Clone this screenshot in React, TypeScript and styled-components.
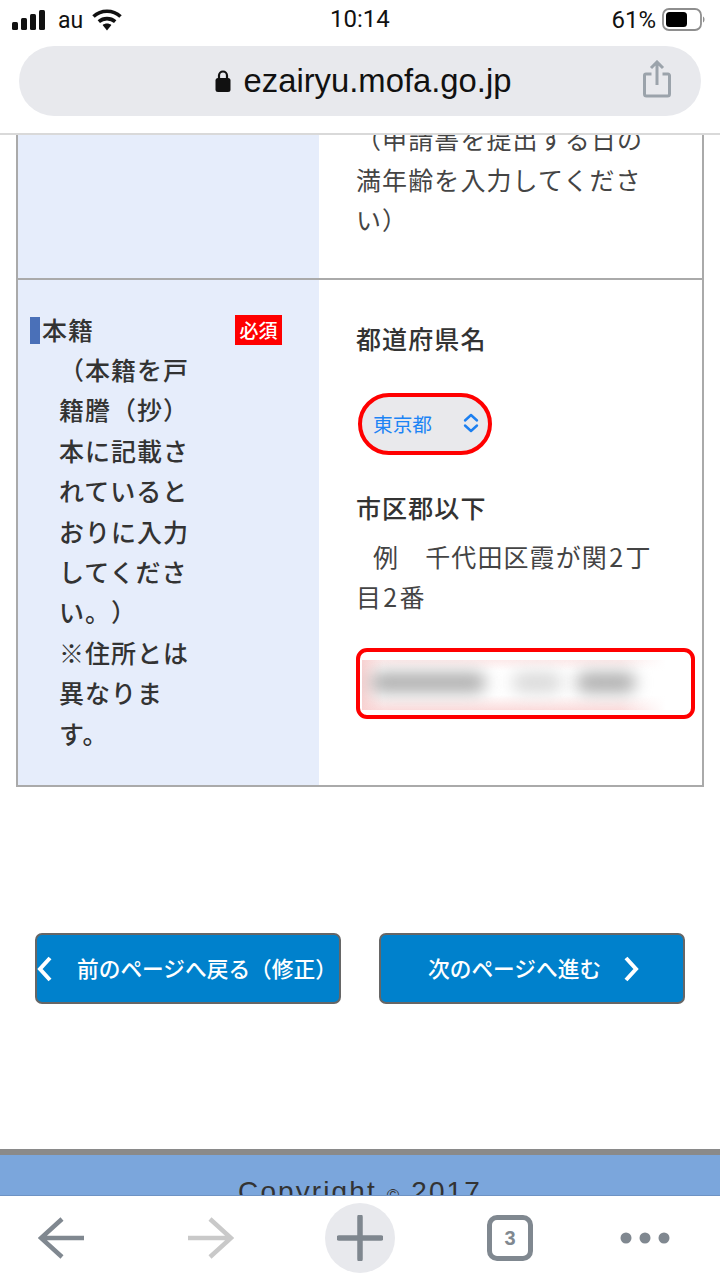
import React from "react";
import styled, { createGlobalStyle } from "styled-components";

const Global = createGlobalStyle`
  html, body { margin: 0; padding: 0; background: #fff; }
  * { box-sizing: border-box; text-spacing-trim: space-all; }
`;

const JP = `"Noto Sans CJK JP", "Noto Sans", sans-serif`;

const Screen = styled.div`
  width: 720px;
  height: 1280px;
  display: flex;
  flex-direction: column;
  overflow: hidden;
  background: #fff;
  font-family: ${JP};
  color: #333;
`;

const TopChrome = styled.header`
  height: 135px;
  flex: none;
  background: #fff;
  border-bottom: 2px solid #d9d9d9;
`;

const StatusBar = styled.div`
  height: 46px;
  position: relative;
  display: flex;
  align-items: center;
  justify-content: space-between;
  padding: 0 14px 6px 12px;
  font-family: Roboto, sans-serif;
  font-size: 24px;
  color: #111;
`;

const StatusGroup = styled.div`
  display: flex;
  align-items: center;
  gap: 6px;
`;

const Carrier = styled.span`
  margin: 0 3px 0 7px;
  font-size: 23px;
`;

const Clock = styled.span`
  position: absolute;
  left: 330px;
  top: 5px;
  font-size: 24px;
  font-weight: 400;
`;

const UrlBar = styled.div`
  margin: 0 19px;
  height: 70px;
  border-radius: 35px;
  background: #e8e9ed;
  position: relative;
  display: flex;
  align-items: center;
  justify-content: center;
  gap: 13px;
  padding-left: 6px;
  font-family: "Liberation Sans", sans-serif;
  font-size: 32.8px;
  color: #111;
`;

const ShareButton = styled.span`
  position: absolute;
  right: 30px;
  top: 14px;
  display: flex;
`;

const Content = styled.main`
  flex: 1;
  min-height: 0;
  overflow: hidden;
  display: flex;
  flex-direction: column;
`;

const FormTable = styled.section`
  margin: -17px 16px 0;
  border: 2px solid #aaa;
  border-top: 0;
  flex: none;
`;

const Row = styled.div`
  display: grid;
  grid-template-columns: 301px 1fr;
  & + & {
    border-top: 2px solid #aaa;
  }
`;

const HeadCell = styled.div`
  background: #e6edfb;
  padding: 29px 12px 32px;
  position: relative;
`;

const BodyCell = styled.div<{ $bottom: number; $top: number }>`
  padding: ${(p) => p.$top}px 8px ${(p) => p.$bottom}px 37px;
`;

const BodyText = styled.p<{ $indent?: number; $mt?: number }>`
  margin: ${(p) => p.$mt ?? 0}px 0 0;
  font-size: 25px;
  line-height: 40.5px;
  letter-spacing: 1.1px;
  text-indent: ${(p) => p.$indent ?? 0}px;
  width: 304px;
  color: #444;
  font-weight: 400;
`;

const Digit = styled.span`
  padding: 0 1.25px;
`;

const HeadTitle = styled.div`
  display: flex;
  align-items: center;
  font-size: 25px;
  line-height: 40.5px;
  letter-spacing: 1px;
  font-weight: 500;
  gap: 2px;
`;

const Marker = styled.span`
  width: 10px;
  height: 27px;
  margin-top: 4px;
  background: #4a70b8;
`;

const Required = styled.span`
  position: absolute;
  left: 217px;
  top: 35px;
  width: 47px;
  height: 30px;
  background: #f00;
  color: #fff;
  font-size: 19px;
  font-weight: 500;
  line-height: 29px;
  text-align: center;
`;

const HeadNote = styled.p`
  margin: 0 0 0 29px;
  width: 134px;
  font-size: 25px;
  line-height: 40.4px;
  letter-spacing: 1px;
  font-weight: 500;
`;

const FieldLabel = styled.div<{ $mt?: number }>`
  font-size: 25px;
  line-height: 40.5px;
  letter-spacing: 1.1px;
  font-weight: 500;
  margin-top: ${(p) => p.$mt ?? 0}px;
`;

const SelectPill = styled.div`
  margin: 35px 0 0 2px;
  width: 134px;
  height: 62px;
  border: 4px solid #f00;
  border-radius: 31px;
  background: #e9e9ec;
  display: flex;
  align-items: center;
  justify-content: space-between;
  padding: 0 9px 2px 11px;
  font-size: 19.7px;
  color: #1c84f5;
`;

const InputFrame = styled.div`
  margin-top: 31px;
  width: 339px;
  height: 71px;
  border: 4px solid #f00;
  border-radius: 11px;
  padding: 8px 0 0 2px;
`;

const BlurPatch = styled.div`
  width: 304px;
  height: 50px;
  background:
    linear-gradient(90deg, transparent 85%, #fff 100%),
    linear-gradient(90deg, #f8d2d2 0%, rgba(255, 255, 255, 0) 7%),
    linear-gradient(180deg, #fdeaea 0%, #fff 22%, #fff 70%, #fbdcdc 100%);
  position: relative;
  overflow: hidden;
`;

const BlurInk = styled.span<{ $l: number; $w: number; $c: string }>`
  position: absolute;
  left: ${(p) => p.$l}px;
  width: ${(p) => p.$w}px;
  top: 12px;
  height: 21px;
  border-radius: 10px;
  background: ${(p) => p.$c};
  filter: blur(8px);
`;

const ButtonRow = styled.div`
  margin-top: 146px;
  padding: 0 35px;
  display: flex;
  justify-content: space-between;
  flex: none;
`;

const NavButton = styled.div`
  width: 306px;
  height: 71px;
  background: #0081cc;
  border: 2px solid #666;
  border-radius: 7px;
  color: #fff;
  font-size: 21.7px;
  font-weight: 500;
  display: flex;
  align-items: center;
  white-space: nowrap;
  padding-bottom: 3px;
`;

const BackIcon = styled.svg`
  margin: 3px 24px 0 0;
  flex: none;
`;

const NextIcon = styled.svg`
  margin: 3px 0 0 22px;
  flex: none;
`;

const NextLabel = styled.span`
  margin-left: 47px;
`;

const Footer = styled.footer`
  margin-top: 145px;
  flex: 1;
  border-top: 6px solid #8a8a8a;
  background: #7ba6dc;
  text-align: center;
  font-family: "Liberation Sans", sans-serif;
  font-size: 28px;
  letter-spacing: 2.1px;
  color: #333;
  padding-top: 19px;
  line-height: 36px;
  white-space: nowrap;
  overflow: hidden;
`;

const Copy = styled.small`
  font-size: 17px;
`;

const BottomBar = styled.nav`
  height: 85px;
  flex: none;
  background: #fff;
  border-top: 1px solid #6e93c4;
  display: grid;
  grid-template-columns: 122px 178px 120px 180px 90px;
  align-items: center;
`;

const ToolSlot = styled.div`
  display: flex;
  justify-content: center;
  align-items: center;
  height: 84px;
`;

const PlusCircle = styled.div`
  width: 70px;
  height: 70px;
  border-radius: 50%;
  background: #e8e9ed;
  display: flex;
  align-items: center;
  justify-content: center;
`;

const TabCount = styled.div`
  width: 46px;
  height: 46px;
  border: 5px solid #808890;
  border-radius: 10px;
  font-family: "Liberation Sans", sans-serif;
  font-size: 20px;
  color: #808890;
  font-weight: 700;
  display: flex;
  align-items: center;
  justify-content: center;
`;

const Signal = () => (
  <svg width="33" height="20" viewBox="0 0 33 20">
    <rect x="0" y="12" width="6" height="8" rx="1.5" fill="#111" />
    <rect x="9" y="8" width="6" height="12" rx="1.5" fill="#111" />
    <rect x="18" y="4" width="6" height="16" rx="1.5" fill="#111" />
    <rect x="27" y="0" width="6" height="20" rx="1.5" fill="#111" />
  </svg>
);

const Wifi = () => (
  <svg width="30" height="22" viewBox="0 0 30 22">
    <path d="M1.5 7.5 C9 0.5 21 0.5 28.5 7.5" fill="none" stroke="#111" strokeWidth="3.6" />
    <path d="M6.8 12.6 C11.5 8.6 18.5 8.6 23.2 12.6" fill="none" stroke="#111" strokeWidth="3.6" />
    <path d="M10.6 16 C13 14 17 14 19.4 16 L15 21.5 Z" fill="#111" />
  </svg>
);

const Battery = () => (
  <svg width="44" height="24" viewBox="0 0 44 24">
    <rect x="1" y="1" width="38" height="21" rx="6" fill="none" stroke="#8e8e8e" strokeWidth="1.8" />
    <rect x="4" y="4" width="21" height="15" rx="3.5" fill="#000" />
    <path d="M41 8.5 C43 9.5 43 13.5 41 14.5 Z" fill="#8e8e8e" />
  </svg>
);

const Lock = () => (
  <svg width="16" height="24" viewBox="0 0 16 24">
    <path d="M4 10 V6.5 a4 4 0 0 1 8 0 V10" fill="none" stroke="#111" strokeWidth="2.2" />
    <rect x="0.5" y="9" width="15" height="14" rx="2.5" fill="#111" />
  </svg>
);

const Share = () => (
  <svg width="28" height="38" viewBox="0 0 28 38">
    <path d="M8.5 14 H3 a1.5 1.5 0 0 0 -1.5 1.5 V34 a2 2 0 0 0 2 2 H24.5 a2 2 0 0 0 2 -2 V15.5 a1.5 1.5 0 0 0 -1.5 -1.5 H19.5" fill="none" stroke="#9ba3ab" strokeWidth="3" />
    <path d="M14 25 V2.5 M8 8 L14 2 L20 8" fill="none" stroke="#9ba3ab" strokeWidth="3" />
  </svg>
);

const Updown = () => (
  <svg width="16" height="20" viewBox="0 0 16 20">
    <path d="M2 7.5 L8 2 L14 7.5 M2 12.5 L8 18 L14 12.5" fill="none" stroke="#1c7ff0" strokeWidth="2.4" strokeLinecap="round" strokeLinejoin="round" />
  </svg>
);

const ArrowSvg = styled.svg<{ $flip?: boolean }>`
  transform: ${(p) => (p.$flip ? "scaleX(-1)" : "none")};
`;

const Arrow = ({ flip, color }: { flip?: boolean; color: string }) => (
  <ArrowSvg $flip={flip} width="46" height="42" viewBox="0 0 46 42">
    <path d="M46 21 H3 M24 2 L3 21 L24 40" fill="none" stroke={color} strokeWidth="4.5" />
  </ArrowSvg>
);

const Plus = () => (
  <svg width="46" height="46" viewBox="0 0 46 46">
    <path d="M23 2 V44 M2 23 H44" stroke="#7f878f" strokeWidth="5.5" strokeLinecap="round" />
  </svg>
);

const Dots = () => (
  <svg width="50" height="14" viewBox="0 0 50 14">
    <circle cx="6" cy="7" r="5.5" fill="#808890" />
    <circle cx="25" cy="7" r="5.5" fill="#808890" />
    <circle cx="44" cy="7" r="5.5" fill="#808890" />
  </svg>
);

export default function App() {
  return (
    <Screen>
      <Global />
      <TopChrome>
        <StatusBar>
          <StatusGroup>
            <Signal />
            <Carrier>au</Carrier>
            <Wifi />
          </StatusGroup>
          <Clock>10:14</Clock>
          <StatusGroup>
            <span>61%</span>
            <Battery />
          </StatusGroup>
        </StatusBar>
        <UrlBar>
          <Lock />
          <span>ezairyu.mofa.go.jp</span>
          <ShareButton>
            <Share />
          </ShareButton>
        </UrlBar>
      </TopChrome>
      <Content>
        <FormTable>
          <Row>
            <HeadCell />
            <BodyCell $top={0} $bottom={38}>
              <BodyText>（申請書を提出する日の満年齢を入力してください）</BodyText>
            </BodyCell>
          </Row>
          <Row>
            <HeadCell>
              <HeadTitle>
                <Marker />
                本籍
              </HeadTitle>
              <Required>必須</Required>
              <HeadNote>
                （本籍を戸籍謄（抄）本に記載されているとおりに入力してください。）
                <br />
                ※住所とは異なります。
              </HeadNote>
            </HeadCell>
            <BodyCell $top={38} $bottom={65}>
              <FieldLabel>都道府県名</FieldLabel>
              <SelectPill>
                東京都
                <Updown />
              </SelectPill>
              <FieldLabel $mt={32}>市区郡以下</FieldLabel>
              <BodyText $indent={17} $mt={8}>
                例　千代田区霞が関<Digit>2</Digit>丁目<Digit>2</Digit>番
              </BodyText>
              <InputFrame>
                <BlurPatch>
                  <BlurInk $l={8} $w={116} $c="#b0b0b0" />
                  <BlurInk $l={150} $w={50} $c="#dadada" />
                  <BlurInk $l={214} $w={60} $c="#b0b0b0" />
                </BlurPatch>
              </InputFrame>
            </BodyCell>
          </Row>
        </FormTable>
        <ButtonRow>
          <NavButton>
            <BackIcon width="16" height="26" viewBox="0 0 16 26">
              <path d="M13 2 L3 13 L13 24" fill="none" stroke="#fff" strokeWidth="4" />
            </BackIcon>
            前のページへ戻る（修正）
          </NavButton>
          <NavButton>
            <NextLabel>次のページへ進む</NextLabel>
            <NextIcon width="16" height="26" viewBox="0 0 16 26">
              <path d="M3 2 L13 13 L3 24" fill="none" stroke="#fff" strokeWidth="4" />
            </NextIcon>
          </NavButton>
        </ButtonRow>
        <Footer>
          Copyright <Copy>©</Copy> 2017
        </Footer>
      </Content>
      <BottomBar>
        <ToolSlot>
          <Arrow color="#808890" />
        </ToolSlot>
        <ToolSlot>
          <Arrow flip color="#c9c9c9" />
        </ToolSlot>
        <ToolSlot>
          <PlusCircle>
            <Plus />
          </PlusCircle>
        </ToolSlot>
        <ToolSlot>
          <TabCount>3</TabCount>
        </ToolSlot>
        <ToolSlot>
          <Dots />
        </ToolSlot>
      </BottomBar>
    </Screen>
  );
}
